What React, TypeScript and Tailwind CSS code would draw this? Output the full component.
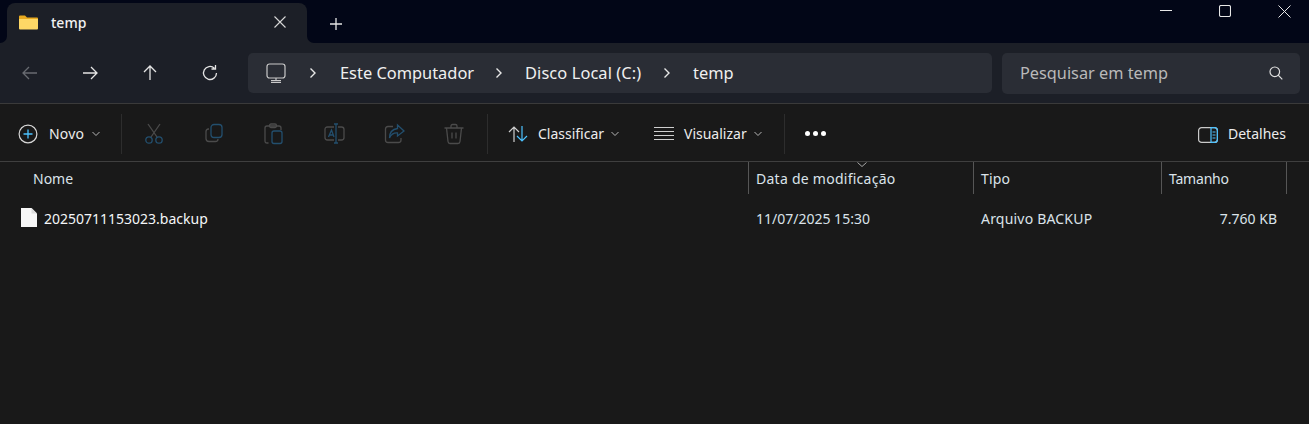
import React from "react";

const font = { fontFamily: '"Noto Sans", "Open Sans", sans-serif' };
const G = "#4b4b4b";
const B = "#234f6e";

function Chevron({ className = "" }: { className?: string }) {
  return (
    <svg width="8" height="6" viewBox="0 0 8 6" className={className} fill="none" stroke="#b5b5b5" strokeWidth="1">
      <path d="M0.5 1 L4 4.5 L7.5 1" />
    </svg>
  );
}

function Crumb() {
  return (
    <svg width="8" height="12" viewBox="0 0 8 12" fill="none" stroke="#e8e8e8" strokeWidth="1.4" className="shrink-0">
      <path d="M1.5 1.5 L6 6 L1.5 10.5" />
    </svg>
  );
}

function NavIcon({ children, dim }: { children: React.ReactNode; dim?: boolean }) {
  return (
    <div className="w-[60px] flex justify-center items-center">
      <svg width="18" height="18" viewBox="0 0 18 18" fill="none" stroke={dim ? "#686b71" : "#e4e4e4"} strokeWidth="1.3">
        {children}
      </svg>
    </div>
  );
}

function ToolIcon({ children }: { children: React.ReactNode }) {
  return (
    <div className="w-[60px] flex justify-center items-center">
      <svg width="22" height="22" viewBox="0 0 22 22" fill="none" strokeWidth="1.3">
        {children}
      </svg>
    </div>
  );
}

function Divider() {
  return <div className="w-px h-[40px] bg-[#2d2d2d] shrink-0" />;
}

function Th({ w, label, pl = 8, sep = true, className = "" }: { w: number; label: string; pl?: number; sep?: boolean; className?: string }) {
  return (
    <div
      className={`h-[32px] flex items-center text-[14px] text-[#dbe3ea] shrink-0 whitespace-nowrap ${sep ? "border-r border-[#565656]" : ""} ${className}`}
      style={{ width: w, paddingLeft: pl }}
    >
      {label}
    </div>
  );
}

function TabCorner({ side }: { side: "left" | "right" }) {
  return (
    <div className={`absolute bottom-0 w-[7px] h-[7px] bg-[#1c1f27] ${side === "left" ? "left-0" : "left-[307px]"}`}>
      <div className={`w-full h-full bg-[#020617] ${side === "left" ? "rounded-br-[7px]" : "rounded-bl-[7px]"}`} />
    </div>
  );
}

export default function App() {
  return (
    <div className="w-[1309px] h-[424px] bg-[#191919] overflow-hidden flex flex-col text-white" style={font}>
      {/* Title bar */}
      <div className="h-[43px] bg-[#020617] flex items-end pl-[7px] shrink-0 relative">
        <TabCorner side="left" />
        <TabCorner side="right" />
        <div className="w-[300px] h-[40px] bg-[#1c1f27] rounded-t-[8px] flex items-center pl-[12px] pr-[21px]">
          <svg width="19" height="15" viewBox="0 0 19 15" className="shrink-0 -mt-[1px]">
            <path d="M0 1.5 Q0 0.5 1 0.5 H6 L8 2.5 H18 Q19 2.5 19 3.5 V4 H0 Z" fill="#e8a91f" />
            <path d="M0 4 H19 V13.5 Q19 14.5 18 14.5 H1 Q0 14.5 0 13.5 Z" fill="#fdd766" />
          </svg>
          <span className="ml-[13px] text-[14px] font-medium text-[#f2f2f2] flex-1 -mt-[1px]">temp</span>
          <svg width="12" height="12" viewBox="0 0 12 12" fill="none" stroke="#d8d8d8" strokeWidth="1.1" className="-mt-[3px]">
            <path d="M0.5 0.5 L11.5 11.5 M11.5 0.5 L0.5 11.5" />
          </svg>
        </div>
        <div className="ml-[23px] mb-[13px] w-[12px] h-[12px]">
          <svg width="12" height="12" viewBox="0 0 12 12" fill="none" stroke="#e4e4e4" strokeWidth="1.3">
            <path d="M6 0 V12 M0 6 H12" />
          </svg>
        </div>
        <div className="absolute right-[18px] top-[5px] flex items-start gap-[47px]">
          <svg width="12" height="12" viewBox="0 0 12 12" fill="none" stroke="#e8e8e8" strokeWidth="1"><path d="M0 5.5 H12" /></svg>
          <svg width="12" height="12" viewBox="0 0 12 12" fill="none" stroke="#e8e8e8" strokeWidth="1.1"><rect x="0.5" y="0.5" width="11" height="11" rx="1.5" /></svg>
          <svg width="13" height="13" viewBox="0 0 13 13" fill="none" stroke="#e8e8e8" strokeWidth="1"><path d="M0.5 0.5 L12.5 12.5 M12.5 0.5 L0.5 12.5" /></svg>
        </div>
      </div>

      {/* Address row */}
      <div className="h-[61px] bg-[#1c1f27] border-b border-[#3a3a3a] flex items-center shrink-0 box-border">
        <NavIcon dim><path d="M16 9 H2 M8 3 L2 9 L8 15" /></NavIcon>
        <NavIcon><path d="M2 9 H16 M10 3 L16 9 L10 15" /></NavIcon>
        <NavIcon><path d="M9 16 V2 M3 8 L9 2 L15 8" /></NavIcon>
        <NavIcon><path d="M15.5 9 A6.5 6.5 0 1 1 13.4 4.2 M14.5 1 V5 H10.5" /></NavIcon>
        <div className="ml-[8px] w-[744px] h-[40px] rounded-[5px] bg-[#2a2d35] flex items-center pl-[18px] text-[16.4px] text-[#f0f0f0]">
          <svg width="20" height="20" viewBox="0 0 20 20" fill="none" stroke="#c9c9c9" strokeWidth="1.2" className="shrink-0">
            <rect x="1" y="1" width="18" height="14" rx="2.5" />
            <path d="M10 15 V17.5 M5 17.5 H15 M5 19.3 H15" />
          </svg>
          <span className="ml-[23px]"><Crumb /></span>
          <span className="ml-[23px] w-[134px] whitespace-nowrap">Este Computador</span>
          <span className="ml-[21px]"><Crumb /></span>
          <span className="ml-[22px] w-[117px] whitespace-nowrap tracking-[0.1px]">Disco Local (C:)</span>
          <span className="ml-[21px]"><Crumb /></span>
          <span className="ml-[22px]">temp</span>
        </div>
        <div className="ml-[10px] w-[298px] h-[41px] rounded-[5px] bg-[#2a2d35] flex items-center pl-[18px] pr-[17px] text-[16.3px] text-[#b9b9b9]">
          <span className="flex-1">Pesquisar em temp</span>
          <svg width="14" height="14" viewBox="0 0 14 14" fill="none" stroke="#e0e0e0" strokeWidth="1.2">
            <circle cx="5.8" cy="5.8" r="4.8" />
            <path d="M9.2 9.2 L13.3 13.3" />
          </svg>
        </div>
      </div>

      {/* Toolbar */}
      <div className="h-[58px] pt-[2px] border-b border-[#3f3f3f] flex items-center shrink-0 box-border text-[14px] text-[#ececec]">
        <svg width="20" height="20" viewBox="0 0 20 20" fill="none" className="ml-[18px] shrink-0">
          <circle cx="10" cy="10" r="8.9" stroke="#d6d6d6" strokeWidth="1.2" />
          <path d="M10 5.5 V14.5 M5.5 10 H14.5" stroke="#4cc2ff" strokeWidth="1.3" />
        </svg>
        <span className="ml-[11px] w-[37px] tracking-[0.2px]">Novo</span>
        <Chevron className="ml-[6px]" />
        <div className="ml-[21px]"><Divider /></div>
        <div className="ml-[3px] flex">
          <ToolIcon>
            <path d="M4 1 L13 14 M16 1 L7 14" stroke={G} />
            <circle cx="5" cy="17" r="3.2" stroke={B} />
            <circle cx="15" cy="17" r="3.2" stroke={B} />
          </ToolIcon>
          <ToolIcon>
            <path d="M5 6 H4.5 Q2 6 2 8.5 V15.5 Q2 18.5 5 18.5 H11.5 Q14 18.5 14 16" stroke={G} />
            <rect x="7" y="1.5" width="11" height="13" rx="3" stroke={B} />
          </ToolIcon>
          <ToolIcon>
            <path d="M4.5 20 H3 Q1 20 1 18 V5 Q1 3 3 3 H15 Q17 3 17 5 V7" stroke={G} />
            <rect x="5.5" y="1" width="7" height="3.5" rx="1.5" stroke={G} />
            <rect x="8" y="8" width="10" height="12.5" rx="2" stroke={B} />
          </ToolIcon>
          <ToolIcon>
            <path d="M10 4 H3.5 Q1 4 1 6.5 V14.5 Q1 17 3.5 17 H10 M14 4 H17.5 Q20 4 20 6.5 V14.5 Q20 17 17.5 17 H14" stroke={G} />
            <path d="M12 1 V20 M10 1 H14 M10 20 H14" stroke={B} />
            <path d="M4.5 14 L7.5 7 L10 14 M5.5 12 H9.5" stroke={B} />
          </ToolIcon>
          <ToolIcon>
            <path d="M9 3.5 H4 Q1.5 3.5 1.5 6 V17 Q1.5 19.5 4 19.5 H14.5 Q17 19.5 17 17 V15" stroke={G} />
            <path d="M13.5 2 L20 8 L13.5 13 V10 Q8 9.5 5.5 15 Q5.5 6.5 13.5 5.5 Z" stroke={B} />
          </ToolIcon>
          <ToolIcon>
            <path d="M0.5 5 H19.5 M7 5 V3 Q7 1.5 8.5 1.5 H11.5 Q13 1.5 13 3 V5 M2.5 5 L4 18.5 Q4.2 20.5 6 20.5 H14 Q15.8 20.5 16 18.5 L17.5 5" stroke={G} />
            <path d="M8 9.5 V15.5 M12 9.5 V15.5" stroke={G} />
          </ToolIcon>
        </div>
        <div className="ml-[2px]"><Divider /></div>
        <svg width="20" height="18" viewBox="0 0 20 18" fill="none" strokeWidth="1.2" className="ml-[20px] shrink-0">
          <path d="M6 17 V2 M1 7 L6 2 L11 7" stroke="#cfcfcf" />
          <path d="M14 1 V16 M9 11 L14 16 L19 11" stroke="#4cc2ff" />
        </svg>
        <span className="ml-[10px] w-[66px]">Classificar</span>
        <Chevron className="ml-[7px]" />
        <svg width="20" height="14" viewBox="0 0 20 14" fill="none" stroke="#cfcfcf" strokeWidth="1" className="ml-[35px] shrink-0">
          <path d="M0 0.5 H20 M0 4.5 H20 M0 8.5 H20 M0 12.5 H20" />
        </svg>
        <span className="ml-[10px] w-[64px]">Visualizar</span>
        <Chevron className="ml-[6px]" />
        <div className="ml-[22px]"><Divider /></div>
        <div className="ml-[20px] flex gap-[3px]">
          <div className="w-[5px] h-[5px] rounded-full bg-white" />
          <div className="w-[5px] h-[5px] rounded-full bg-white" />
          <div className="w-[5px] h-[5px] rounded-full bg-white" />
        </div>
        <svg width="20" height="16" viewBox="0 0 20 16" fill="none" className="ml-auto shrink-0 mt-[2px]">
          <rect x="0.6" y="0.6" width="18.8" height="14.8" rx="3" stroke="#c9c9c9" strokeWidth="1.2" />
          <path d="M13 0.6 H16.5 Q19.4 0.6 19.4 3.5 V12.5 Q19.4 15.4 16.5 15.4 H13 Z" stroke="#4cc2ff" strokeWidth="1.2" />
          <path d="M14.5 5 H17.5 M14.5 8 H17.5 M14.5 11 H17.5" stroke="#4cc2ff" strokeWidth="1" />
        </svg>
        <span className="ml-[10px] mr-[24px] w-[57px] whitespace-nowrap">Detalhes</span>
      </div>

      {/* Header */}
      <div className="flex shrink-0 relative">
        <div className="w-[33px] shrink-0" />
        <Th w={716} label="Nome" pl={0} />
        <Th w={225} label="Data de modificação" pl={7} className="tracking-[0.26px]" />
        <Th w={188} label="Tipo" pl={7} className="tracking-[0.2px]" />
        <Th w={125} label="Tamanho" pl={7} className="tracking-[-0.2px]" />
        <svg width="10" height="5" viewBox="0 0 10 5" fill="none" stroke="#a8a8a8" strokeWidth="1" className="absolute left-[857px] top-0">
          <path d="M0.5 0.5 L5 4.5 L9.5 0.5" />
        </svg>
      </div>

      {/* Row */}
      <div className="flex items-center mt-[12px] h-[24px] text-[14px] text-[#dbe3ea]">
        <svg width="16" height="19" viewBox="0 0 16 19" className="ml-[21px] shrink-0 -mt-[2px]">
          <path d="M0 0 H10.5 L16 5.5 V19 H0 Z" fill="#f7f7f7" />
          <path d="M10.5 0 V5.5 H16 Z" fill="#dcdcdc" />
        </svg>
        <span className="ml-[7px] w-[712px] text-[#f4f6f8] whitespace-nowrap">20250711153023.backup</span>
        <span className="w-[225px] whitespace-nowrap">11/07/2025 15:30</span>
        <span className="w-[188px] whitespace-nowrap tracking-[0.2px]">Arquivo BACKUP</span>
        <span className="w-[108px] text-right whitespace-nowrap">7.760 KB</span>
      </div>
    </div>
  );
}
